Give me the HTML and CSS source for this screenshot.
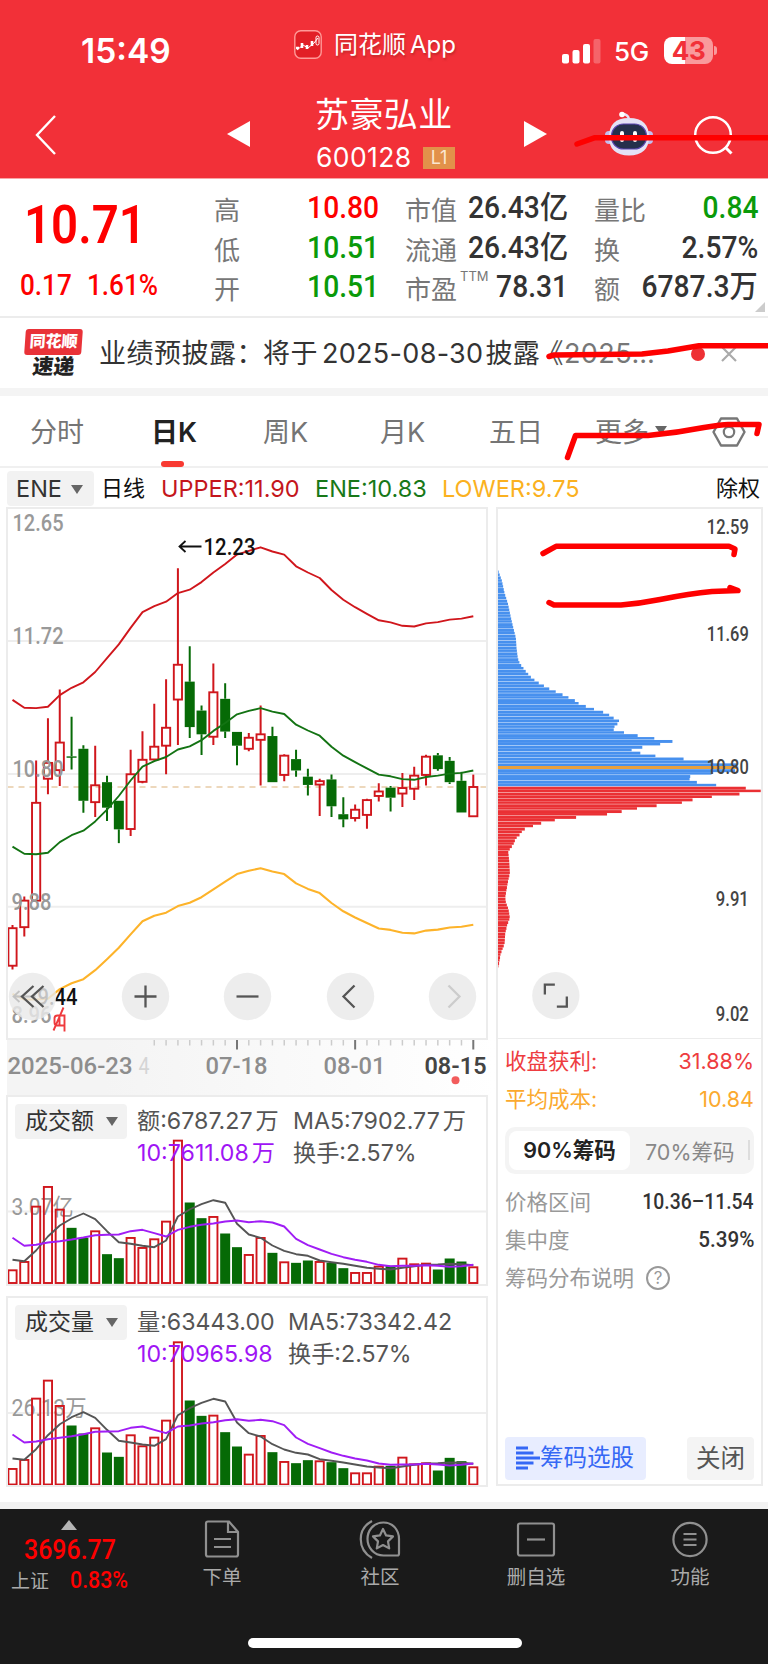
FILE: index.html
```html
<!DOCTYPE html>
<html lang="zh-CN">
<head>
<meta charset="utf-8">
<title>苏豪弘业 600128</title>
<link rel="stylesheet" href="styles.css">
</head>
<body>
<div class="phone">
  <header class="header">
    <div class="status">
      <span class="clock">15:49</span>
      <span class="app-name">
        <svg class="app-logo" width="28" height="29" viewBox="0 0 28 29"><rect x=".8" y=".8" width="26.4" height="27.4" rx="6" fill="#e21f26" stroke="#ff9a98" stroke-width="1.4"/><path d="M2 18h3M8 13v5M13 15v4M18 11v5" stroke="#fff" stroke-width="2.6"/><path d="M3 20l6-5 5 3 6-5 4-5" fill="none" stroke="#fff" stroke-width="1"/><rect x="22" y="6" width="3" height="9" rx="1.5" fill="none" stroke="#fff"/></svg>
        <span class="app-text">同花顺<span class="latin">App</span></span>
      </span>
      <span class="signals">
        <svg width="39" height="25" viewBox="0 0 39 25"><g fill="#fff"><rect x="0" y="15" width="7" height="9.5" rx="2"/><rect x="10.5" y="11" width="7" height="13.5" rx="2"/><rect x="21" y="5" width="7" height="19.5" rx="2"/><rect x="31.5" y="0" width="7" height="24.5" rx="2" opacity=".25"/></g></svg>
        <span class="net">5G</span>
        <span class="battery"><b>43</b></span><i class="nub"></i>
      </span>
    </div>
    <div class="titlebar">
      <svg class="back" width="22" height="42" viewBox="0 0 22 42"><path d="M20 2L2 21l18 19" fill="none" stroke="#fff" stroke-width="2.4"/></svg>
      <svg class="prev" width="23" height="26" viewBox="0 0 23 26"><path d="M23 0v26L0 13z" fill="#fff"/></svg>
      <div class="stock"><h1>苏豪弘业</h1><p><span class="code">600128</span><span class="level">L1</span></p></div>
      <svg class="next" width="23" height="26" viewBox="0 0 23 26"><path d="M0 0v26l23-13z" fill="#fff"/></svg>
      <svg class="robot" width="48" height="46" viewBox="0 0 48 46"><path d="M24 8C23 4 21 3 17 3" stroke="#e7e2f5" stroke-width="2.400" fill="none"/><circle cx="17" cy="3.500" r="2.800" fill="#fff"/><rect x="0" y="20" width="8" height="13" rx="4" fill="#c3bdf0"/><rect x="40" y="20" width="8" height="13" rx="4" fill="#c3bdf0"/><path d="M24 7C38 7 44 14 44 26S37 44.500 24 44.500 4 38 4 26 10 7 24 7z" fill="#e4e2f6"/><rect x="6.500" y="13" width="35" height="25" rx="12" fill="#25304c" stroke="#5a45b0" stroke-width="1.200"/><path d="M17 22v7M30 22v7" stroke="#fff" stroke-width="4" stroke-linecap="round"/></svg>
      <svg class="search" width="42" height="42" viewBox="0 0 42 42"><circle cx="20" cy="20" r="17.800" fill="none" stroke="#fff" stroke-width="2.500"/><path d="M32 32l6.500 6.500" stroke="#fff" stroke-width="3"/></svg>
    </div>
  </header>

  <section class="quote">
    <div class="last"><div class="price"><span class="din">10.71</span></div><div class="chg"><span class="din">0.17</span><span class="din">1.61%</span></div></div>
    <dl class="up"><dt>高</dt><dd>10.80</dd></dl>
    <dl><dt>市值</dt><dd>26.43亿</dd></dl>
    <dl class="down"><dt>量比</dt><dd>0.84</dd></dl>
    <dl class="down"><dt>低</dt><dd>10.51</dd></dl>
    <dl><dt>流通</dt><dd>26.43亿</dd></dl>
    <dl><dt>换</dt><dd>2.57%</dd></dl>
    <dl class="down"><dt>开</dt><dd>10.51</dd></dl>
    <dl><dt class="pe">市盈<sup>TTM</sup></dt><dd>78.31</dd></dl>
    <dl><dt>额</dt><dd>6787.3万</dd></dl>
    <i class="corner"></i>
  </section>

  <section class="news">
    <div class="news-logo"><b>同花顺</b><strong>速递</strong></div>
    <p>业绩预披露：<span class="a">将于</span><span class="date">2025-08-30</span>披露<span class="q">《</span><span class="date2">2025…</span></p>
    <i class="dot"></i>
    <svg width="16" height="16" viewBox="0 0 16 16"><path d="M1 1l14 14M15 1L1 15" stroke="#aaa" stroke-width="2.2"/></svg>
  </section>

  <nav class="tabs">
    <span>分时</span><span class="on">日K</span><span>周K</span><span>月K</span><span>五日</span><span>更多<i class="caret"></i></span>
    <svg width="34" height="30" viewBox="0 0 34 30"><path d="M9 1.500h16L32.500 15 25 28.500H9L1.500 15z" fill="none" stroke="#777" stroke-width="2.4" stroke-linejoin="round"/><circle cx="17" cy="15" r="5.200" fill="none" stroke="#777" stroke-width="2.2"/></svg>
  </nav>

  <div class="indicator">
    <span class="pick">ENE<i class="caret"></i></span>
    <span class="daily">日线</span><span class="upper">UPPER:11.90</span><span class="ene">ENE:10.83</span><span class="lower">LOWER:9.75</span><span class="adj">除权</span>
  </div>

  <main class="charts">
    <div class="left">
      <svg id="kline" class="kline" width="480" height="531" viewBox="7.500 507.500 480 531"></svg>
      <svg id="axis" class="axis" width="488" height="57" viewBox="7.500 1038.500 488 57"></svg>
      <section class="volume">
        <svg id="amount" width="480" height="189" viewBox="7.500 1095.500 480 189"></svg>
        <div class="legend"><span class="pick">成交额<i class="caret"></i></span>
          <div class="lines amount-lines"><span>额:6787.27<em>万</em></span><span>MA5:7902.77<em>万</em></span><span class="violet">10:7611.08<em>万</em></span><span>换手:2.57%</span></div></div>
      </section>
      <section class="volume">
        <svg id="hands" width="480" height="189" viewBox="7.500 1296.500 480 189"></svg>
        <div class="legend"><span class="pick">成交量<i class="caret"></i></span>
          <div class="lines hands-lines"><span>量:63443.00</span><span>MA5:73342.42</span><span class="violet">10:70965.98</span><span>换手:2.57%</span></div></div>
      </section>
    </div>
    <aside class="chips">
      <svg id="dist" width="264" height="531" viewBox="497 507.500 264 531"></svg>
      <div class="info">
        <p class="red"><span>收盘获利:</span><span>31.88%</span></p>
        <p class="gold"><span>平均成本:</span><span>10.84</span></p>
        <div class="seg"><b><span>90%筹码</span></b><span class="alt">70%筹码</span><i></i></div>
        <p><span>价格区间</span><strong class="range">10.36–11.54</strong></p>
        <p><span>集中度</span><strong>5.39%</strong></p>
        <p class="help"><span>筹码分布说明</span><i>?</i></p>
        <div class="actions">
          <span class="choose"><svg width="24" height="24" viewBox="0 0 24 24"><path d="M0 2h12M0 7h17.500M0 12h24M0 17h17.500M0 22h12" stroke="#3568f5" stroke-width="3.200"/></svg>筹码选股</span>
          <span class="close">关闭</span>
        </div>
      </div>
    </aside>
  </main>

  <footer class="bottom">
    <div class="index"><i></i><b><span>3696.77</span></b><p>上证<span>0.83%</span></p></div>
    <div class="item"><svg width="40" height="38" viewBox="0 0 40 38"><path d="M6 1.500h21L36 12v22.500q0 2-2 2H6q-2 0-2-2v-31q0-2 2-2zM26 2v10h10M12 19h17M12 27h17"/></svg>下单</div>
    <div class="item"><svg width="42" height="40" viewBox="0 0 42 40"><path d="M13 2C-2 10-2 30 13 39M24.500 3.500C14 3.500 8.500 12 8.500 20s6 16.500 16 16.500h14q1.500 0 1.500-2V20c0-9-6-16.500-15.500-16.500z"/><path d="M24 10l3.100 6.400 6.900 1-5 5 1.200 7L24 26l-6.200 3.400 1.200-7-5-5 6.900-1z" stroke-linejoin="round"/></svg>社区</div>
    <div class="item"><svg width="40" height="38" viewBox="0 0 40 38"><rect x="2" y="3.500" width="36" height="32" rx="2"/><path d="M11 19.500h18"/></svg>删自选</div>
    <div class="item"><svg width="38" height="38" viewBox="0 0 38 38"><circle cx="19" cy="19.500" r="16.600"/><path d="M12.500 14h13M12.500 19.500h13M12.500 25h13"/></svg>功能</div>
    <i class="home"></i>
  </footer>

  <svg class="ink" width="768" height="1664" viewBox="0 0 768 1664">
    <path d="M577 144L595 137.700H768"/>
    <path d="M549 356.500L554 355 642 354 668 351 699 345.700H768"/>
    <path d="M567.500 457.500L575.500 435.500H648Q676 433 704 427.500 722 424.500 728 424.500H759L757 433.500"/>
    <path d="M543 553.500L556 546.300H729L735 549 734 554.500"/>
    <path d="M549 602.500L554 605H621Q640 603.500 660 599.500 690 593.500 712 591.500L738 590.500 730 587.500"/>
  </svg>
</div>
<script src="charts.js"></script>
</body>
</html>
```
FILE: styles.css
```css
* { box-sizing: border-box; }
body, h1, p, dl, dd { margin: 0; }
body { background: #fff; font-family: Inter, "Noto Sans CJK SC", sans-serif; color: #333; }
i, em { font-style: normal; }
svg { display: block; flex: none; }
.phone { position: relative; width: 768px; height: 1664px; overflow: hidden; }
.din { display: inline-block; font-family: Roboto, "Noto Sans CJK SC", sans-serif; transform: scaleX(.88); transform-origin: left; }
.caret { display: inline-block; border: 6px solid transparent; border-top: 9px solid #666; border-bottom: 0; }

.header { height: 179px; background: #f23038; color: #fff; border-bottom: 1px solid #f9a5a5; }
.status { display: grid; grid-template-columns: 294px 268px auto; height: 90px; }
.clock { padding: 29px 0 0 81px; font-size: 33.500px; line-height: 44px; font-weight: 600; }
.app-name { display: flex; gap: 12px; padding-top: 30px; }
.app-text { font-size: 24px; line-height: 30px; text-shadow: 1px 2px 2px #a0202088; }
.latin { margin-left: 4px; }
.signals { display: flex; align-items: flex-start; padding-top: 39px; }
.net { margin-left: 13px; width: 37px; font-size: 26px; line-height: 26px; font-weight: 500; letter-spacing: -.3px; }
.battery { width: 49px; height: 27px; margin: -2px 0 0 13px; border-radius: 8px; background: linear-gradient(90deg, #fff 43%, #f99a9c 43%); color: #f23038; text-align: center; font-size: 26px; line-height: 27px; letter-spacing: -.5px; }
.battery b { font-weight: 700; }
.nub { width: 3px; height: 9px; margin: 7px 0 0 1px; border-radius: 0 4px 4px 0; background: #f99a9c; }
.titlebar { display: grid; grid-template-columns: 227px 88px 209px 81px 88px auto; height: 88px; align-items: start; }
.back { margin: 24px 0 0 35px; grid-column: 1; grid-row: 1; }
.prev { margin-top: 31px; }
.next { margin-top: 31px; }
.robot { margin-top: 21px; }
.search { margin-top: 25px; }
.stock h1 { font-size: 34px; line-height: 46px; font-weight: 400; margin-top: 2px; letter-spacing: .4px; }
.stock p { display: flex; align-items: center; height: 38px; padding-left: 1px; }
.code { font-size: 26.500px; width: 107px; letter-spacing: .4px; }
.level { width: 32px; height: 22px; margin-top: 2px; background: #e2914a; color: #fbe6d0; font-size: 18px; line-height: 22px; text-align: center; }

.quote { position: relative; display: grid; grid-template-columns: 188px 165px 163px 164px; grid-template-rows: repeat(3, 39.500px); column-gap: 26px; height: 139px; padding-top: 9px; border-bottom: 2px solid #ececec; }
.last { grid-row: 1 / 4; color: #fe0000; padding-left: 24px; }
.price { height: 72px; font-size: 54.500px; line-height: 71px; font-weight: 600; }
.price .din { transform: scaleX(.87); transform-origin: left; }
.chg { display: flex; font-size: 29px; line-height: 51px; font-weight: 500; margin-left: -4px; }
.chg .din:first-child { width: 67px; }
.chg .din { transform: scaleX(.9); }
.quote dl { display: flex; justify-content: space-between; align-items: center; white-space: nowrap; height: 39px; }
.quote dt { font-size: 26px; color: #777; position: relative; top: 1px; }
.quote dd { font: 500 31px/39px Roboto, "Noto Sans CJK SC", sans-serif; transform: scaleX(.91); transform-origin: right; }
.quote .up dd { color: #fe0000; }
.quote .down dd { color: #0a9a0a; }
.pe sup { position: absolute; left: 55px; top: -1px; font-size: 13px; line-height: 16px; }
.corner { position: absolute; right: 3px; bottom: 4px; border: 5px solid #ccc; border-top-color: transparent; border-left-color: transparent; }

.news { display: flex; height: 70px; padding-top: 4px; }
.news-logo { width: 57px; margin: 7px 0 0 25px; text-align: center; }
.news-logo b { display: block; height: 26px; border-radius: 3px; transform: skewX(-4deg); background: #e93238; color: #fff; font-size: 16px; line-height: 25px; font-weight: 900; }
.news-logo strong { display: block; font-size: 21px; line-height: 24px; font-weight: 900; transform: skewX(-6deg); color: #222; }
.news p { width: 590px; margin-left: 17px; font-size: 27px; line-height: 63px; letter-spacing: .5px; white-space: nowrap; }
.news .a { margin-left: -1px; }
.date { margin: 0 2px 0 4px; letter-spacing: .3px; }
.q { margin-left: -4px; color: #555; }
.date2 { color: #777; }
.dot { width: 14px; height: 14px; margin: 25px 0 0 2px; border-radius: 50%; background: #ee3034; }
.news svg { margin: 24px 0 0 16px; }

.tabs { display: grid; grid-template-columns: 121px 112px 117px 109px 106px 117px auto; height: 80px; padding: 0 0 2px 30px; border-top: 8px solid #f4f4f4; border-bottom: 2px solid #f0f0f0; font-size: 27px; line-height: 74px; color: #757575; }
.tabs .on { color: #222; font-weight: 600; }
.tabs .on::after { content: ""; display: block; width: 23px; height: 6px; margin: -9px 0 0 10px; border-radius: 3px; background: #f83a32; }
.tabs .caret { margin-left: 6px; vertical-align: 7px; }
.tabs svg { margin-top: 21px; }

.indicator { display: flex; height: 39.500px; padding: 3px 8px 0 7px; font-size: 23.500px; line-height: 35px; white-space: nowrap; }
.pick { background: #f2f2f2; border-radius: 4px; color: #333; }
.indicator .pick { width: 87px; height: 35px; padding-left: 9px; }
.indicator .caret { margin-left: 9px; vertical-align: 3px; }
.daily { margin-left: 7px; font-size: 22px; width: 60px; color: #111; }
.upper { width: 154px; color: #c4161c; }
.ene { width: 127px; color: #187818; }
.lower { color: #fbb120; }
.adj { margin-left: auto; font-size: 22px; color: #111; }

.charts { display: grid; grid-template-columns: 490px 266px; padding-left: 7px; height: 994.500px; }
.left { display: grid; grid-template-rows: 531px 57px 189px 189px; align-content: start; }
.left > :last-child { margin-top: 12px; }
.kline, .volume, .chips { outline: 2px solid #ececec; outline-offset: -1px; }
.kline { background: #fff; position: relative; }
.axis { width: 488px; }
.volume { display: grid; width: 480px; height: 189px; }
.volume > * { grid-area: 1 / 1; }
.legend { display: flex; align-items: flex-start; padding: 8px 0 0 8px; z-index: 1; }
.legend .pick { width: 112px; height: 35px; padding-left: 10px; font-size: 23px; line-height: 34px; }
.legend .caret { margin-left: 12px; vertical-align: 3px; }
.lines { display: grid; margin-left: 10px; font-size: 23.200px; line-height: 32px; margin-top: 1px; color: #555; white-space: nowrap; }
.lines em { margin-left: 3px; }
.amount-lines { grid-template-columns: 156px auto; }
.hands-lines { grid-template-columns: 151px auto; }
.violet { color: #9f15f5; }

.chips { width: 265px; height: 977px; }
.chips > svg { border-bottom: 1px solid #ececec; }
.info { padding: 3px 8px 0 8px; font-size: 21.500px; }
.info p { display: flex; justify-content: space-between; height: 38px; line-height: 38px; color: #999; }
.info .red { color: #ee3c40; }
.info .gold { color: #fba92e; }
.info strong { font: 500 21.500px/38px Roboto, sans-serif; color: #333; transform: scaleX(.96); transform-origin: right; }
.info .range { transform: scaleX(.9); }
.seg { display: flex; align-items: center; height: 47px; margin: 9px 0 9px; padding: 4px; border-radius: 10px; background: #f4f4f4; }
.seg b { width: 121px; height: 39px; border-radius: 8px; background: #fff; color: #222; text-align: center; line-height: 38px; font-weight: 600; }
.alt { margin-left: 15px; color: #888; }
.seg i { width: 2px; height: 20px; margin-left: auto; background: #ddd; }
.info .help { justify-content: flex-start; align-items: center; }
.help i { width: 24px; height: 24px; margin-left: 12px; border: 2px solid #999; border-radius: 50%; line-height: 20px; font-size: 17px; text-align: center; }
.actions { display: flex; justify-content: space-between; margin-top: 140px; line-height: 42px; }
.choose { display: flex; align-items: center; width: 141px; height: 43px; padding-left: 11px; border-radius: 4px; background: #e8edff; color: #3568f5; font-size: 23.500px; }
.close { width: 67px; border-radius: 4px; background: #f4f4f4; color: #555; text-align: center; font-size: 24.500px; }

.bottom { position: relative; display: grid; grid-template-columns: 144px 156px 160px 152px 156px; height: 162px; background: #1a1a1a; border-top: 7px solid #f2f2f2; color: #aaa; }
.index { font-family: Roboto, "Noto Sans CJK SC", sans-serif; padding: 11px 0 0 11px; }
.index > i { display: block; width: 0; margin-left: 50px; border: 8.500px solid transparent; border-top: 0; border-bottom: 10px solid #b5b5b5; }
.index b { display: block; height: 37px; color: #fe0000; font-size: 28px; line-height: 39px; font-weight: 500; padding-left: 13px; }
.index b span, .index p span { display: inline-block; transform: scaleX(.89); transform-origin: left; }
.index p { font-size: 19px; line-height: 27px; white-space: nowrap; }
.index p span { margin-left: 21px; color: #fe0000; font-size: 24px; font-weight: 500; }
.item { display: flex; flex-direction: column; align-items: center; padding-top: 10px; font-size: 19.500px; line-height: 36px; }
.item svg { height: 40px; fill: none; stroke: #909090; stroke-width: 2.200; }
.home { position: absolute; left: 248px; bottom: 16px; width: 274px; height: 10px; border-radius: 5px; background: #fff; }
.ink { position: absolute; inset: 0; fill: none; stroke: #fe0000; stroke-width: 5.500; stroke-linecap: round; stroke-linejoin: round; pointer-events: none; z-index: 3; }
```
FILE: charts.js
```js
// Chart geometry: one candle every STEP px, vertical values in drawing units.
const X0 = 13, STEP = 11.815, RED = '#d0161c', GREEN = '#066a06';
const cx = i => X0 + i * STEP;
const ky = v => 500 + v / 2.904;
const line = (pts, y, color, w = 1.9) =>
  `<polyline fill="none" stroke="${color}" stroke-width="${w}" stroke-linejoin="round" points="${pts.map((v, i) => cx(i).toFixed(1) + ',' + y(v, i).toFixed(1)).join(' ')}"/>`;
const label = (t, x, y, w, size, color, weight = 400) =>
  `<text x="${x}" y="${y + size * 0.356}" textLength="${w}" lengthAdjust="spacingAndGlyphs" font-family="Roboto, 'Noto Sans CJK SC', sans-serif" font-size="${size}" font-weight="${weight}" fill="${color}">${t}</text>`;
const rule = y => `<path d="M8 ${y}H487" stroke="#eee" stroke-width="2"/>`;

// [direction, high, body top, body bottom, low]
const candles = [
  [1,1233,1242,1351,1362],[1,1150,1162,1239,1266],[1,755,878,1162,1162],[1,632,762,808,853],[1,549,703,783,829],
  [0,628,743,745,781],[0,711,721,872,907],[1,712,827,876,919],[0,799,818,892,931],[0,872,872,955,995],
  [1,724,795,954,974],[1,670,753,817,821],[1,590,715,752,755],[1,519,660,712,795],[1,197,477,578,710],
  [0,423,526,658,690],[0,595,610,679,739],[1,473,557,686,710],[0,531,576,671,690],[0,672,672,712,769],
  [1,675,689,721,728],[1,595,679,695,828],[0,657,684,818,818],[1,737,741,797,815],[0,724,751,784,802],
  [0,779,802,826,857],[1,808,815,825,916],[0,796,810,888,919],[0,862,911,926,949],[1,883,898,922,932],
  [1,866,870,913,953],[1,821,845,858,874],[0,829,834,863,903],[1,791,835,851,890],[1,773,799,837,870],
  [1,738,744,797,828],[0,733,740,780,785],[0,745,756,818,823],[0,788,814,906,906],[1,796,832,917,917]];
const upper = [579,602,603,599,565,544,528,498,458,418,370,324,307,294,269,259,237,209,184,157,146,136,148,157,191,209,225,260,288,310,329,348,354,364,366,357,353,346,343,336];
const ene = [1005,1026,1027,1023,992,972,959,932,898,858,813,773,757,745,723,714,696,669,646,621,611,603,613,620,651,668,683,715,741,760,778,796,801,809,811,803,799,793,791,784];
const lower = [1433,1449,1449,1447,1419,1402,1390,1364,1332,1299,1260,1222,1206,1197,1178,1168,1152,1129,1107,1085,1075,1068,1077,1085,1112,1128,1140,1169,1193,1211,1227,1243,1247,1255,1257,1249,1246,1240,1238,1232];

const button = (x, glyph, faint) =>
  `<circle cx="${x}" cy="996" r="23.700" fill="#e9e9e9" fill-opacity=".82"/><path d="${glyph}" transform="translate(${x} 996)" fill="none" stroke="${faint ? '#ccc' : '#555'}" stroke-width="2.300"/>`;

let k = rule(640.5) + rule(773.4) + rule(906.3);
k += '<path d="M8 786.500H487" stroke="#e8cba6" stroke-width="1.500" stroke-dasharray="6 5"/>';
candles.forEach(([up, h, t, b, l], i) => {
  const x = cx(i), c = up ? RED : GREEN;
  k += `<path d="M${x} ${ky(h)}V${ky(t)}M${x} ${ky(b)}V${ky(l)}" stroke="${c}" stroke-width="2"/>`;
  k += up
    ? `<rect x="${x - 4.1}" y="${ky(t)}" width="8.200" height="${ky(b) - ky(t)}" fill="none" stroke="${c}" stroke-width="1.900"/>`
    : `<rect x="${x - 5}" y="${ky(t)}" width="10" height="${Math.max(1.4, ky(b) - ky(t))}" fill="${c}"/>`;
});
k += line(upper, ky, '#d0161c') + line(ene, ky, '#137313') + line(lower, ky, '#fdb32a', 2.1);
k += label('12.65', 13, 522.7, 51, 23, '#999', 500) + label('11.72', 13, 635.5, 51, 23, '#999', 500) + label('10.80', 13, 768.5, 51, 23, '#999', 500);
k += label('9.88', 12, 901.5, 40, 23, '#999', 500) + label('8.96', 12, 1014.5, 40, 23, '#999', 500);
k += '<path d="M202 546H180M186 540.500L180 546l6 5.500" fill="none" stroke="#111" stroke-width="1.800"/>' + label('12.23', 204, 546, 52, 23, '#111', 500);
k += '<path d="M36 996H14M20 990.500L14 996l6 5.500" fill="none" stroke="#111" stroke-width="1.800"/>' + label('9.44', 38, 996, 40, 23, '#111', 500);
k += '<path d="M65 1014V1031M65 1015H58Q55 1015 55 1018V1022Q55 1025 58 1025H65M54 1030L64 1007M60 1017V1025" fill="none" stroke="#ef3a3d" stroke-width="1.900"/>';
k += button(33, 'M1 -10.500L-10.500 0L1 10.500M11 -10.500L-.5 0L11 10.500');
k += button(146, 'M-11 0H11M0 -11V11') + button(248, 'M-11 0H11');
k += button(351, 'M4 -11L-7 0L4 11') + button(453, 'M-4 -11L7 0L-4 11', true);
document.getElementById('kline').innerHTML = k;

let a = '<defs><linearGradient id="fade"><stop offset=".2" stop-color="#f4f4f4"/><stop offset="1" stop-color="#fff"/></linearGradient></defs><rect x="7" y="1038" width="489" height="58" fill="url(#fade)"/>';
for (let i = 12; i < 40; i++) {
  const major = i === 19 || i === 29 || i === 39;
  a += `<path d="M${cx(i)} 1039V${major ? 1049 : 1045}" stroke="${major ? '#777' : '#ccc'}" stroke-width="${major ? 2 : 1.5}"/>`;
}
a += label('2025-06-23', 8, 1065.2, 125, 23.5, '#8d8d8d', 500) + label('4', 139, 1065.2, 11, 23.5, '#d5d5d5');
a += label('07-18', 206, 1065.2, 62, 23.5, '#8d8d8d', 500) + label('08-01', 324, 1065.2, 62, 23.5, '#8d8d8d', 500) + label('08-15', 425, 1065.2, 62, 23.5, '#444', 600);
a += '<circle cx="456" cy="1079.700" r="4" fill="#f25c5c"/>';
document.getElementById('axis').innerHTML = a;

const amount = [717,692,526,467,535,592,622,600,671,683,620,650,624,571,328,516,563,557,609,650,671,620,667,693,697,690,692,697,713,725,725,706,706,682,699,697,717,684,693,708];
const hands = [563,536,352,298,374,435,459,441,516,529,462,495,469,418,183,360,406,403,455,498,520,464,515,542,548,539,540,545,563,576,576,556,556,529,549,546,570,532,542,558];
const ma5 = [688,692,660,618,585,564,549,566,602,635,640,646,650,630,558,537,521,509,517,580,612,622,645,661,671,676,690,695,700,706,712,715,717,712,707,703,702,700,701,704];
const ma10 = [622,646,643,636,632,627,621,614,613,612,602,598,608,618,598,589,583,579,573,570,575,572,576,588,625,644,657,670,680,688,694,703,707,706,706,704,706,709,707,703];

function volume(id, tops, top, base, mid, midLabel, shift) {
  const y = v => top + v / 3;
  let s = rule(mid) + midLabel;
  tops.forEach((t, i) => {
    const x = cx(i);
    s += candles[i][0]
      ? `<rect x="${x - 4.1}" y="${y(t) + .8}" width="8.200" height="${base - y(t) - .8}" fill="none" stroke="${RED}" stroke-width="1.900"/>`
      : `<rect x="${x - 5}" y="${y(t)}" width="10" height="${base - y(t) + .8}" fill="${GREEN}"/>`;
  });
  s += line(ma5, v => y(v - shift), '#555') + line(ma10, (v, i) => y(v - shift - (shift && i < 15 ? 6 : 0)), '#a01df5');
  document.getElementById(id).innerHTML = s;
}
volume('amount', amount, 1030, 1282.5, 1211, label('3.07亿', 12, 1206.2, 62, 23, '#999'), 0);
volume('hands', hands, 1280, 1484, 1412.5, label('26.13万', 12, 1407.5, 75, 23, '#999'), 154);

// Cost distribution envelope: [y, width]
const env = [[202,2],[234,14],[270,22],[300,32],[345,42],[370,48],[400,56],[430,58],[460,62],[475,68],[490,80],[500,88],[515,102],[525,115],[533,128],[542,145],[551,162],[559,182],[567,201],[576,219],[584,238],[592,246],[601,272],[610,298],[618,325],[626,339],[635,353],[643,369],[651,360],[660,351],[668,350],[676,383],[684,422],[693,475],[702,533],[711,481],[718,436],[727,402],[735,430],[744,478],[752,560],[760,640],[769,720],[777,725],[786,715],[795,640],[803,580],[812,578],[820,600],[828.5,658],[837,747],[845.5,792],[854,728],[862.5,645],[871,587],[879.5,555],[888,479],[896.5,420],[905,374],[913.5,330],[922,237],[930.5,173],[939,132],[947,109],[955,84],[963,75],[972,68],[985,55],[1000,49],[1015,38],[1022,33],[1050,36],[1085,38],[1110,32],[1155,24],[1170,26],[1190,34],[1215,38],[1235,30],[1260,24],[1290,22],[1320,10],[1345,6],[1362,2]];
let d = '';
for (let n = -74; n <= 61; n++) {
  const v = 837 + n * 8.5;
  const j = env.findIndex(e => e[0] >= v);
  if (j < 1) continue;
  const [y0, w0] = env[j - 1], [y1, w1] = env[j];
  const w = (w0 + (w1 - w0) * (v - y0) / (y1 - y0)) / 3;
  d += `<rect x="497" y="${ky(v) - 1.46}" width="${w}" height="${n % 2 ? 2.5 : 2.93}" fill="${n < 0 ? '#4790ee' : '#ea3034'}"/>`;
}
d += '<rect x="497" y="766" width="240" height="3" fill="#e8a03c"/>';
[['12.59', 526.5, 42], ['11.69', 633.6, 42], ['10.80', 767, 42], ['9.91', 899.5, 33], ['9.02', 1014.8, 33]].forEach(([t, y, w]) => {
  d += label(t, 749 - w, y, w, 20, '#444', 500);
});
d += button(555.7, 'M-11 -1V-11H-1M11 1V11H1');
document.getElementById('dist').innerHTML = d;
```
